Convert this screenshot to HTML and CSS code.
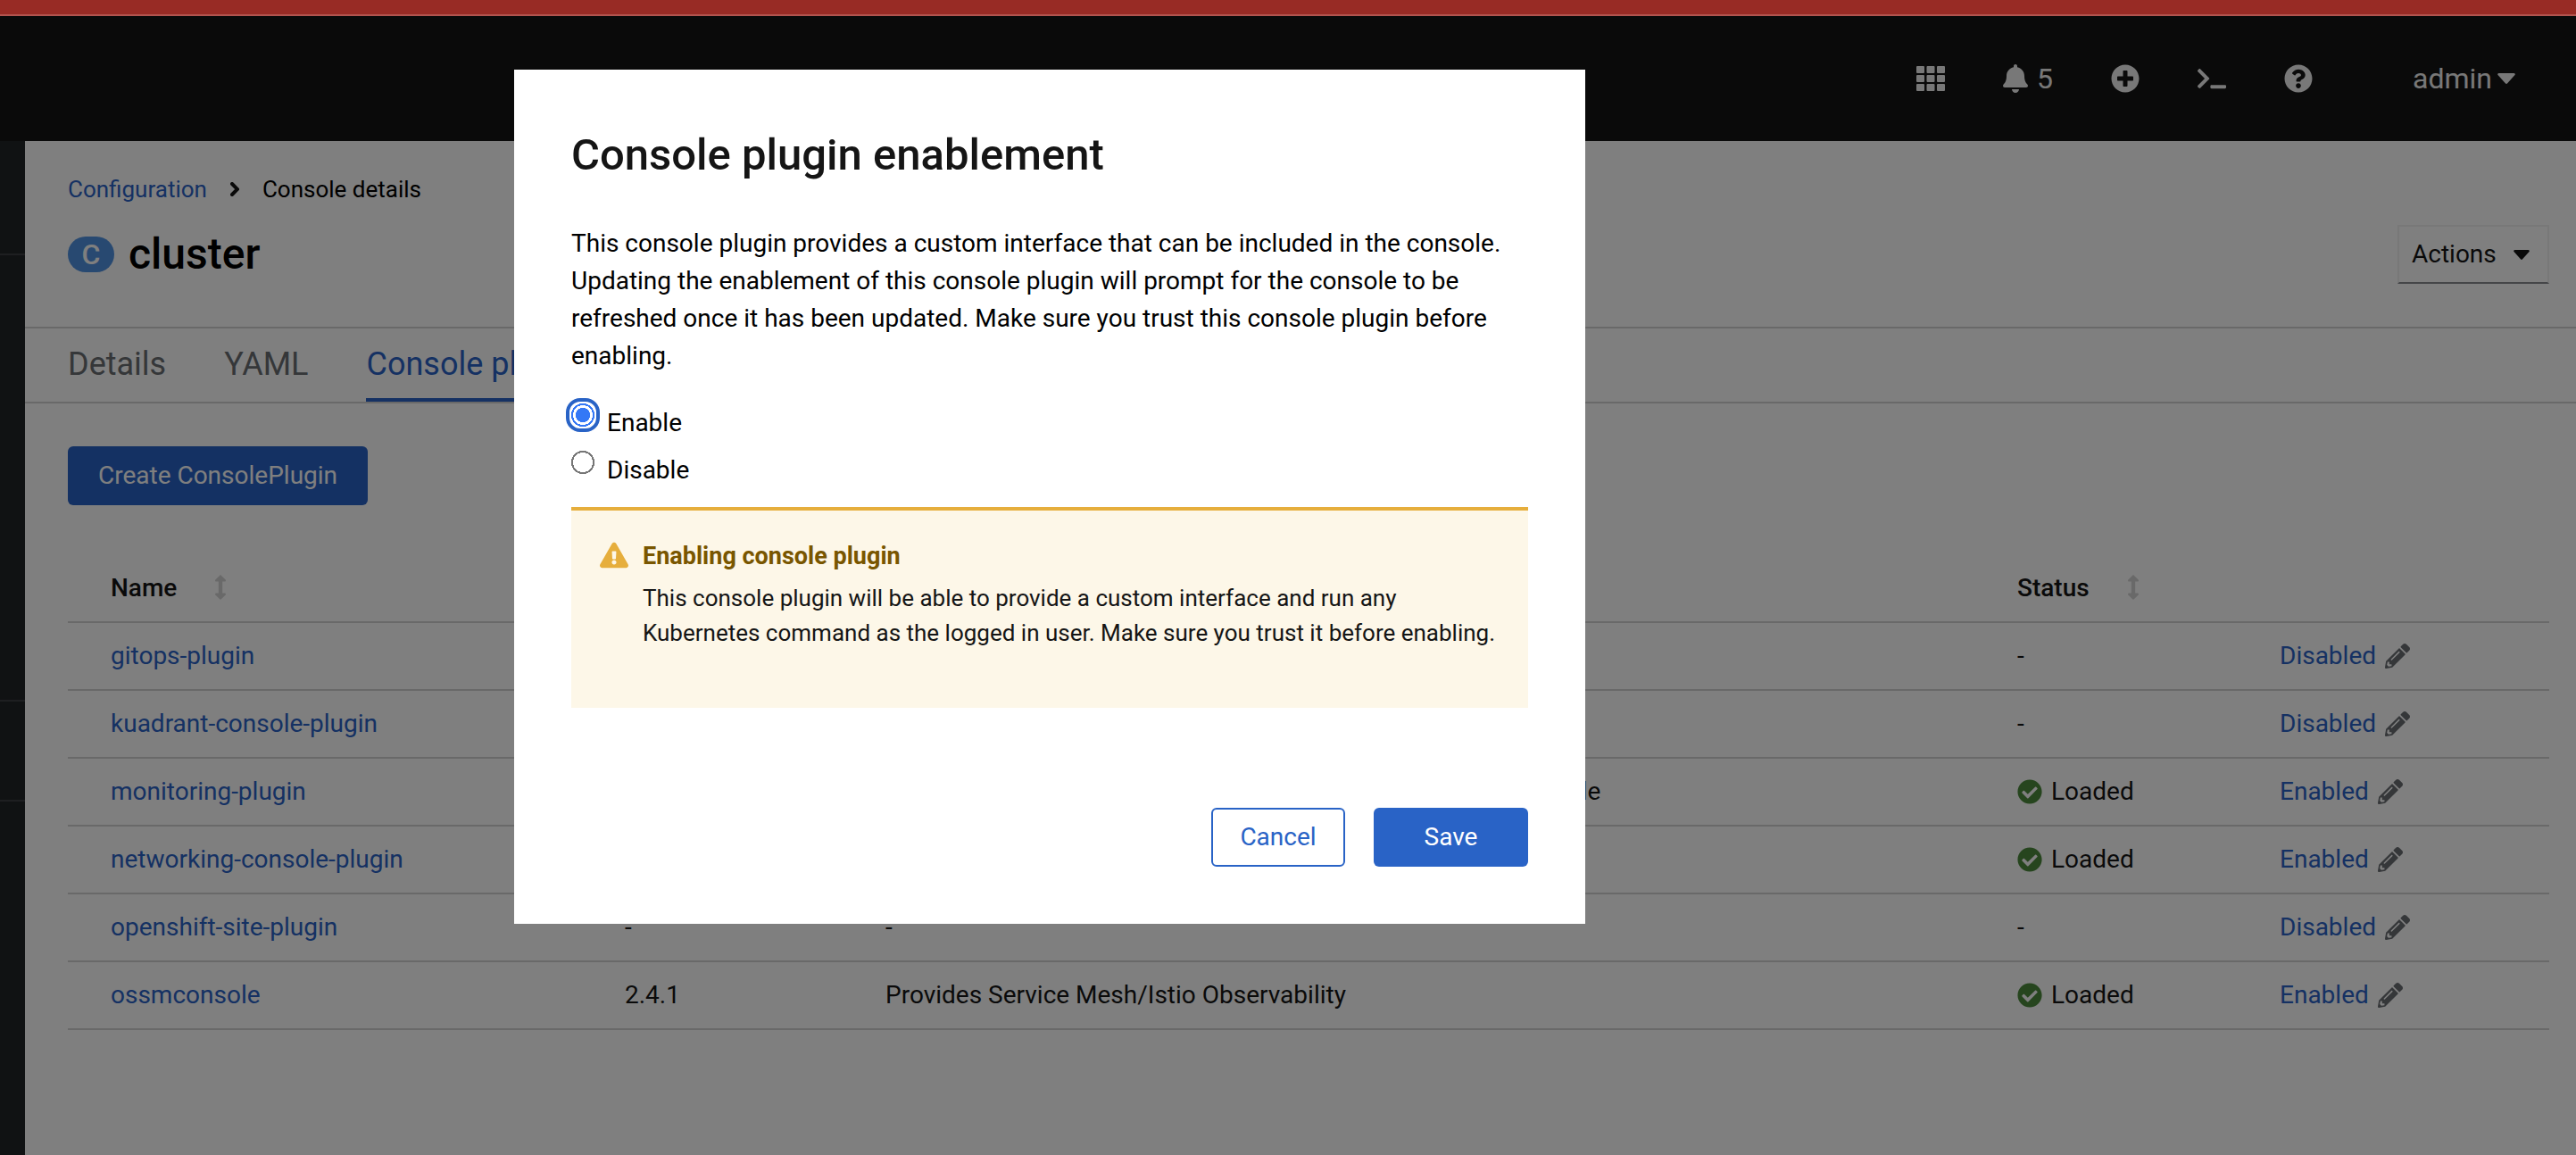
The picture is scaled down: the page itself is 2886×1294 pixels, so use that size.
FILE: index.html
```html
<!DOCTYPE html>
<html lang="en">
<head>
<meta charset="utf-8">
<title>cluster · Console plugins</title>
<link rel="stylesheet" href="styles.css">
</head>
<body>
<svg class="sprite" aria-hidden="true">
  <symbol id="caret" viewBox="0 0 20 12"><path d="M1.5 0h17a1.3 1.3 0 0 1 1 2.1l-8.3 9.2a1.6 1.6 0 0 1-2.4 0L.5 2.1A1.3 1.3 0 0 1 1.5 0z"/></symbol>
  <symbol id="sort" viewBox="0 0 12 28"><path d="M6 0l5.700 5.600c.6.700.2 2-.9 2H8.200v12.800h2.600c1.100 0 1.500 1.300.9 2L6 28 .3 22.400c-.6-.7-.2-2 .9-2h2.600V7.600H1.200c-1.100 0-1.500-1.300-.9-2z"/></symbol>
  <symbol id="check" viewBox="0 0 512 512"><path d="M504 256c0 136.967-111.033 248-248 248S8 392.967 8 256 119.033 8 256 8s248 111.033 248 248zM227.314 387.314l184-184c6.248-6.248 6.248-16.379 0-22.627l-22.627-22.627c-6.248-6.249-16.379-6.249-22.628 0L216 308.118l-70.059-70.059c-6.248-6.248-16.379-6.248-22.628 0l-22.627 22.627c-6.248 6.248-6.248 16.379 0 22.627l104 104c6.249 6.249 16.379 6.249 22.628.001z"/></symbol>
  <symbol id="pencil" viewBox="0 0 512 512"><path d="M497.900 142.100l-46.100 46.100c-4.700 4.700-12.300 4.700-17 0l-111-111c-4.700-4.700-4.700-12.300 0-17l46.100-46.100c18.700-18.700 49.100-18.700 67.900 0l60.100 60.100c18.800 18.700 18.800 49.100 0 67.900zM284.200 99.800L21.600 362.400.4 483.900c-2.900 16.400 11.400 30.600 27.800 27.800l121.500-21.300 262.600-262.600c4.700-4.700 4.700-12.300 0-17l-111-111c-4.800-4.700-12.400-4.700-17.100 0zM124.100 339.900c-5.500-5.500-5.500-14.300 0-19.800l154-154c5.500-5.500 14.300-5.500 19.800 0s5.500 14.300 0 19.800l-154 154c-5.500 5.500-14.300 5.500-19.800 0zM88 424h48v36.300l-64.500 11.300-31.100-31.100L51.700 376H88v48z"/></symbol>
</svg>
<div class="app">
  <div class="banner"></div>
  <header class="masthead">
    <button class="tool" aria-label="Applications"><svg width="32" height="28" viewBox="0 0 32 28"><g><rect width="9" height="8" rx="1"/><rect x="11.500" width="9" height="8" rx="1"/><rect x="23" width="9" height="8" rx="1"/><rect y="10" width="9" height="8" rx="1"/><rect x="11.500" y="10" width="9" height="8" rx="1"/><rect x="23" y="10" width="9" height="8" rx="1"/><rect y="20" width="9" height="8" rx="1"/><rect x="11.500" y="20" width="9" height="8" rx="1"/><rect x="23" y="20" width="9" height="8" rx="1"/></g></svg></button>
    <button class="tool bell"><svg width="28" height="32" viewBox="0 0 448 512"><path d="M224 512c35.320 0 63.970-28.650 63.970-64H160.030c0 35.350 28.650 64 63.970 64zm215.390-149.710c-19.320-20.760-55.470-51.990-55.470-154.290 0-77.700-54.480-139.900-127.940-155.160V32c0-17.670-14.320-32-31.980-32s-31.980 14.330-31.980 32v20.840C118.560 68.100 64.080 130.300 64.080 208c0 102.300-36.150 133.530-55.470 154.290-6 6.450-8.660 14.160-8.610 21.710.11 16.400 12.980 32 32.100 32h383.800c19.120 0 32-15.600 32.100-32 .05-7.550-2.610-15.270-8.610-21.710z"/></svg><span>5</span></button>
    <button class="tool" aria-label="Import"><svg width="32" height="32" viewBox="0 0 512 512"><path d="M256 8C119 8 8 119 8 256s111 248 248 248 248-111 248-248S393 8 256 8zm144 276c0 6.600-5.400 12-12 12h-92v92c0 6.600-5.400 12-12 12h-56c-6.600 0-12-5.400-12-12v-92h-92c-6.600 0-12-5.400-12-12v-56c0-6.600 5.400-12 12-12h92v-92c0-6.600 5.400-12 12-12h56c6.600 0 12 5.400 12 12v92h92c6.600 0 12 5.400 12 12v56z"/></svg></button>
    <button class="tool" aria-label="Command line"><svg width="32" height="26" viewBox="0 0 640 512"><path d="M257.981 272.971L63.638 467.314c-9.373 9.373-24.569 9.373-33.941 0L7.029 444.647c-9.357-9.357-9.375-24.522-.04-33.901L161.011 256 6.990 101.255c-9.335-9.379-9.317-24.544.04-33.901l22.667-22.667c9.373-9.373 24.569-9.373 33.941 0L257.981 239.030c9.373 9.372 9.373 24.568 0 33.941zM640 456v-32c0-13.255-10.745-24-24-24H312c-13.255 0-24 10.745-24 24v32c0 13.255 10.745 24 24 24h304c13.255 0 24-10.745 24-24z"/></svg></button>
    <button class="tool" aria-label="Help"><svg width="32" height="32" viewBox="0 0 512 512"><path d="M504 256c0 136.997-111.043 248-248 248S8 392.997 8 256C8 119.083 119.043 8 256 8s248 111.083 248 248zM262.655 90c-54.497 0-89.255 22.957-116.549 63.758-3.536 5.286-2.353 12.415 2.715 16.258l34.699 26.310c5.205 3.947 12.621 3.008 16.665-2.122 17.864-22.658 30.113-35.797 57.303-35.797 20.429 0 45.698 13.148 45.698 32.958 0 14.976-12.363 22.667-32.534 33.976C247.128 238.528 216 254.941 216 296v4c0 6.627 5.373 12 12 12h56c6.627 0 12-5.373 12-12v-1.333c0-28.462 83.186-29.647 83.186-106.667 0-58.002-60.165-102-116.531-102zM256 338c-25.365 0-46 20.635-46 46 0 25.364 20.635 46 46 46s46-20.636 46-46c0-25.365-20.635-46-46-46z"/></svg></button>
    <button class="tool user"><span>admin</span><svg width="20" height="12"><use href="#caret"/></svg></button>
  </header>
  <div class="body">
    <nav class="sidebar" aria-label="Main"><div class="side-a"></div><div class="side-b"></div><div class="side-c"></div><div class="side-d"></div></nav>
    <main class="page">
      <div class="head">
        <nav class="crumbs" aria-label="Breadcrumb"><a href="#">Configuration</a><svg width="10" height="16" viewBox="0 0 10 16"><path d="M2 2l6 6-6 6" fill="none" stroke="#151515" stroke-width="4" stroke-linecap="round"/></svg><span>Console details</span></nav>
        <div class="title-row">
          <h1><span class="badge">C</span>cluster</h1>
          <button class="actions"><span>Actions</span><svg width="18" height="11" viewBox="0 0 20 12"><use href="#caret"/></svg></button>
        </div>
      </div>
      <nav class="tabs" aria-label="Tabs"><a href="#">Details</a><a href="#">YAML</a><a href="#" class="current">Console plugins</a></nav>
      <div class="content">
        <button class="btn primary create">Create ConsolePlugin</button>
        <table class="plugins">
          <colgroup><col class="c-name"><col class="c-version"><col class="c-desc"><col class="c-status"><col class="c-edit"></colgroup>
          <thead><tr><th>Name<svg class="sort" width="12" height="28"><use href="#sort"/></svg></th><th aria-label="Version"></th><th aria-label="Description"></th><th>Status<svg class="sort" width="12" height="28"><use href="#sort"/></svg></th><th aria-label="Enablement"></th></tr></thead>
          <tbody>
            <tr><td><a href="#">gitops-plugin</a></td><td></td><td></td><td>-</td><td><button class="edit">Disabled<svg width="28" height="28"><use href="#pencil"/></svg></button></td></tr>
            <tr><td><a href="#">kuadrant-console-plugin</a></td><td></td><td></td><td>-</td><td><button class="edit">Disabled<svg width="28" height="28"><use href="#pencil"/></svg></button></td></tr>
            <tr><td><a href="#">monitoring-plugin</a></td><td></td><td>This plugin gives the monitoring UI to the OpenShift web console</td><td><span class="loaded"><svg width="28" height="28"><use href="#check"/></svg>Loaded</span></td><td><button class="edit">Enabled<svg width="28" height="28"><use href="#pencil"/></svg></button></td></tr>
            <tr><td><a href="#">networking-console-plugin</a></td><td></td><td></td><td><span class="loaded"><svg width="28" height="28"><use href="#check"/></svg>Loaded</span></td><td><button class="edit">Enabled<svg width="28" height="28"><use href="#pencil"/></svg></button></td></tr>
            <tr><td><a href="#">openshift-site-plugin</a></td><td>-</td><td>-</td><td>-</td><td><button class="edit">Disabled<svg width="28" height="28"><use href="#pencil"/></svg></button></td></tr>
            <tr><td><a href="#">ossmconsole</a></td><td>2.4.1</td><td>Provides Service Mesh/Istio Observability</td><td><span class="loaded"><svg width="28" height="28"><use href="#check"/></svg>Loaded</span></td><td><button class="edit">Enabled<svg width="28" height="28"><use href="#pencil"/></svg></button></td></tr>
          </tbody>
        </table>
      </div>
    </main>
  </div>
  <div class="backdrop">
    <form class="modal" role="dialog" aria-labelledby="modal-title">
      <h2 id="modal-title">Console plugin enablement</h2>
      <p>This console plugin provides a custom interface that can be included in the console. Updating the enablement of this console plugin will prompt for the console to be refreshed once it has been updated. Make sure you trust this console plugin before enabling.</p>
      <div class="radios">
        <label><input type="radio" name="state" class="focused" checked><span>Enable</span></label>
        <label><input type="radio" name="state"><span>Disable</span></label>
      </div>
      <div class="alert">
        <svg width="32" height="36" viewBox="0 0 576 512"><path fill="#e6ae3c" d="M569.517 440.013C587.975 472.007 564.806 512 527.940 512H48.054c-36.937 0-59.999-40.055-41.577-71.987L246.423 23.985c18.467-32.009 64.720-31.951 83.154 0l239.940 416.028zM288 354c-25.405 0-46 20.595-46 46s20.595 46 46 46 46-20.595 46-46-20.595-46-46-46zm-43.673-165.346l7.418 136c.347 6.364 5.609 11.346 11.982 11.346h48.546c6.373 0 11.635-4.982 11.982-11.346l7.418-136c.375-6.874-5.098-12.654-11.982-12.654h-63.383c-6.884 0-12.356 5.780-11.981 12.654z"/></svg>
        <div><h3>Enabling console plugin</h3><p>This console plugin will be able to provide a custom interface and run any Kubernetes command as the logged in user. Make sure you trust it before enabling.</p></div>
      </div>
      <div class="buttons"><button type="button" class="btn secondary">Cancel</button><button type="button" class="btn primary save">Save</button></div>
    </form>
  </div>
</div>
</body>
</html>
```
FILE: styles.css
```css
* { box-sizing: border-box; }
body { margin: 0; font: 28px/42px Roboto, "Liberation Sans", sans-serif; color: #151515; background: #fff; }
button { font: inherit; color: inherit; background: none; border: 0; padding: 0; }
a { color: #2b63c6; text-decoration: none; }
h1, h2, h3, p { margin: 0; }
svg { fill: currentColor; flex: none; }
.sprite { display: none; }

.app { position: relative; display: flex; flex-direction: column; min-height: 100vh; }
.banner { position: relative; z-index: 2; height: 18px; background: #982b25; border-bottom: 2px solid #b3544f; }

.masthead { height: 140px; padding-right: 68px; display: flex; justify-content: flex-end; align-items: center; background: #151515; color: #f0f0f0; font-size: 32px; }
.tool { display: flex; align-items: center; margin-left: 65px; }
.bell { gap: 10px; }
.user { margin-left: 112px; gap: 6px; }

.body { flex: 1; display: flex; }
.sidebar { width: 28px; flex: none; display: flex; flex-direction: column; background: #212427; }
.sidebar div { border-bottom: 2px solid #3c3f42; }
.side-a { height: 128px; }
.side-b { height: 500px; }
.side-c { height: 112px; }
.sidebar .side-d { flex: 1; border: 0; }
.page { flex: 1; min-width: 0; }

.head { height: 208px; padding: 34px 30px 0 48px; }
.crumbs { display: flex; align-items: center; gap: 26px; font-size: 26px; line-height: 40px; color: #000; }
.title-row { display: flex; justify-content: space-between; align-items: center; margin-top: 20px; height: 66px; }
h1 { display: flex; align-items: center; gap: 16px; font-size: 48px; line-height: 58px; font-weight: 500; color: #000; }
.badge { width: 52px; height: 40px; border-radius: 20px; background: #5193e2; color: #fff; font-size: 32px; line-height: 40px; text-align: center; }
.actions { display: flex; align-items: center; justify-content: space-between; width: 170px; height: 66px; padding: 0 20px 0 14px; border: 2px solid #f0f0f0; border-bottom-color: #8a8d90; }

.tabs { display: flex; gap: 65px; height: 86px; padding-left: 48px; border-top: 2px solid #d2d2d2; border-bottom: 2px solid #d2d2d2; font-size: 36px; line-height: 80px; }
.tabs a { color: #6a6e73; }
.tabs .current { color: #2b63c6; border-bottom: 4px solid #2b63c6; }

.content { padding: 48px 30px 0 48px; }
.btn { height: 66px; border-radius: 6px; text-align: center; }
.primary { background: #2963c6; color: #fff; }
.secondary { border: 2px solid #2963c6; color: #2963c6; }
.create { width: 336px; }

.plugins { width: 100%; margin-top: 56px; table-layout: fixed; border-spacing: 0; text-align: left; }
.c-name { width: 576px; }
.c-version { width: 292px; }
.c-desc { width: 1268px; }
.c-status { width: 294px; }
.plugins th, .plugins td { height: 76px; padding: 0 0 0 48px; border-bottom: 2px solid #d2d2d2; }
.plugins th { font-weight: 500; }
.sort { margin-left: 43px; vertical-align: -4px; color: #d2d2d2; }
.loaded, .edit { display: flex; align-items: center; gap: 10px; }
.loaded svg { color: #4d8a3d; }
.edit { color: #2b63c6; }
.edit svg { color: #6a6e73; }

.backdrop { position: absolute; inset: 0; z-index: 1; display: flex; align-items: flex-start; padding: 78px 0 0 576px; background: rgba(0, 0, 0, .5); }
.modal { width: 1200px; padding: 64px; background: #fff; }
h2 { font-size: 49px; line-height: 64px; font-weight: 500; }
.modal > p { margin-top: 46px; color: #000; }
.radios { display: grid; gap: 10px; margin: 32px 0 20px; color: #000; }
.radios label { display: flex; align-items: flex-start; gap: 14px; }
.radios span { padding-top: 1px; line-height: 42px; }
.radios input { appearance: none; flex: none; width: 26px; height: 26px; margin: 0; border-radius: 10px; background: radial-gradient(circle, #fff 11px, #767676 11px, #767676 13px, #fff 13px); }
.radios input:checked { background: radial-gradient(circle, #3478f6 8px, #fff 8px, #fff 11px, #3478f6 11px, #3478f6 13px, #fff 13px); }
.radios .focused { outline: 4px solid #2963c6; outline-offset: 2px; }
.alert { display: flex; gap: 16px; min-height: 225px; padding: 32px; border-top: 4px solid #e6ae3c; background: #fdf7e8; font-size: 26px; line-height: 39px; }
h3 { font-size: 27px; line-height: 39px; color: #795600; font-weight: 700; }
.alert p { margin-top: 8px; }
.buttons { display: flex; justify-content: flex-end; gap: 32px; margin-top: 112px; }
.secondary { width: 150px; }
.save { width: 173px; }
```
